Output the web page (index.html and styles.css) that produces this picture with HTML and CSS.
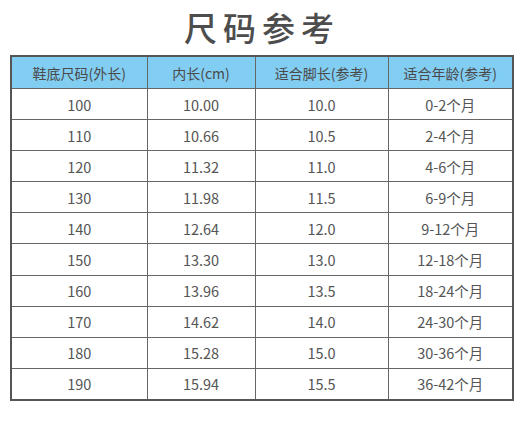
FILE: index.html
```html
<!DOCTYPE html>
<html lang="zh">
<head>
<meta charset="utf-8">
<link rel="stylesheet" href="styles.css">
</head>
<body>
<div class="page">
  <h1 class="title">尺码参考</h1>
  <table class="size-table">
    <colgroup>
      <col class="c1"><col class="c2"><col class="c3"><col class="c4">
    </colgroup>
    <thead>
      <tr><th>鞋底尺码(外长)</th><th>内长(cm)</th><th>适合脚长(参考)</th><th>适合年龄(参考)</th></tr>
    </thead>
    <tbody>
      <tr><td>100</td><td>10.00</td><td>10.0</td><td>0-2个月</td></tr>
      <tr><td>110</td><td>10.66</td><td>10.5</td><td>2-4个月</td></tr>
      <tr><td>120</td><td>11.32</td><td>11.0</td><td>4-6个月</td></tr>
      <tr><td>130</td><td>11.98</td><td>11.5</td><td>6-9个月</td></tr>
      <tr><td>140</td><td>12.64</td><td>12.0</td><td>9-12个月</td></tr>
      <tr><td>150</td><td>13.30</td><td>13.0</td><td>12-18个月</td></tr>
      <tr><td>160</td><td>13.96</td><td>13.5</td><td>18-24个月</td></tr>
      <tr><td>170</td><td>14.62</td><td>14.0</td><td>24-30个月</td></tr>
      <tr><td>180</td><td>15.28</td><td>15.0</td><td>30-36个月</td></tr>
      <tr><td>190</td><td>15.94</td><td>15.5</td><td>36-42个月</td></tr>
    </tbody>
  </table>
</div>
</body>
</html>
```
FILE: styles.css
```css
html, body {
  margin: 0;
  padding: 0;
  background: #ffffff;
}
.page {
  width: 520px;
  height: 421px;
  font-family: "Noto Sans CJK SC", "Noto Sans", sans-serif;
  color: #555555;
}
.title {
  margin: 0;
  height: 55px;
  display: flex;
  align-items: center;
  justify-content: center;
  font-size: 33px;
  font-weight: 500;
  letter-spacing: 6px;
  padding-left: 4px;
  color: #4d4d4d;
  line-height: 1;
}
.size-table {
  margin-left: 10px;
  width: 502px;
  border-collapse: collapse;
  table-layout: fixed;
  border: 2px solid #555555;
}
.c1 { width: 136px; }
.c2 { width: 108px; }
.c3 { width: 133px; }
.c4 { width: 125px; }
.size-table th,
.size-table td {
  border: 1.5px solid #666666;
  text-align: center;
  padding: 0;
  font-weight: 400;
}
.size-table th {
  background: #82cdf2;
  height: 31px;
  font-size: 14px;
  color: #4a4a4a;
}
.size-table td {
  height: 30.1px;
  font-size: 14.5px;
  color: #555555;
}
```
